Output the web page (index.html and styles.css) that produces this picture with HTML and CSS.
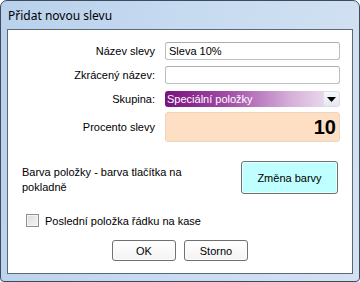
FILE: index.html
```html
<!DOCTYPE html>
<html lang="cs">
<head>
    <meta charset="UTF-8">
    <title>Přidat novou slevu</title>
    <link rel="stylesheet" href="styles.css">
</head>
<body>
    <div class="window">
        <div class="titlebar">Přidat novou slevu</div>
        <div class="client">
            <!-- Main fields -->
            <div class="form">
                <label class="lbl">Název slevy</label>
                <div class="textbox">Sleva 10%</div>

                <label class="lbl row2">Zkrácený název:</label>
                <div class="textbox row2"></div>

                <label class="lbl row3">Skupina:</label>
                <div class="combo row3">
                    <span class="combo-text">Speciální položky</span>
                    <span class="combo-btn">
                        <svg width="9" height="5" viewBox="0 0 9 5"><path d="M0 0H9L4.5 5Z" fill="#000"/></svg>
                    </span>
                </div>

                <label class="lbl row4">Procento slevy</label>
                <div class="percent row4">10</div>
            </div>

            <!-- Colour row -->
            <div class="color-row">
                <p class="color-text">Barva položky - barva tlačítka na pokladně</p>
                <button class="btn btn-color">Změna barvy</button>
            </div>

            <label class="check-row">
                <span class="checkbox"></span>
                Poslední položka řádku na kase
            </label>

            <div class="actions">
                <button class="btn btn-ok">OK</button>
                <button class="btn btn-cancel">Storno</button>
            </div>
        </div>
    </div>
</body>
</html>
```

FILE: styles.css
```css
/* Window frame */
body {
    margin: 0;
    font-family: "Liberation Sans", Arial, sans-serif;
    font-size: 11px;
    color: #000;
    background: #fff;
}
.window {
    width: 360px;
    height: 282px;
    box-sizing: border-box;
    border: 1px solid #3d4b5c;
    border-radius: 7px 7px 4px 4px;
    background: linear-gradient(100deg, #b9d1ec 0%, #c6daf0 45%, #d3e2f2 100%);
    padding: 0 6px 7px 6px;
    display: flex;
    flex-direction: column;
}
.titlebar {
    height: 28px;
    line-height: 29px;
    padding-left: 1px;
    font-family: "Noto Sans", "Liberation Sans", sans-serif;
    font-size: 12px;
    color: #000;
}
.client {
    flex: 1;
    border: 1px solid #5b6876;
    background: #fff;
}

/* Fields */
.form {
    display: grid;
    grid-template-columns: 147px 175px;
    column-gap: 10px;
    padding-top: 12px;
}
.lbl {
    text-align: right;
    align-self: center;
}
.textbox {
    height: 18px;
    box-sizing: border-box;
    border: 1px solid #b9bec5;
    border-top-color: #a9aeb6;
    border-radius: 3px;
    padding: 2px 3px;
    line-height: 13px;
}
.row2 {
    margin-top: 6px;
}
.row3 {
    margin-top: 7px;
}
.row4 {
    margin-top: 5px;
}
.combo {
    height: 16px;
    box-sizing: border-box;
    border-radius: 3px;
    display: flex;
    background: linear-gradient(90deg, #7a1180 0%, #a04ba6 35%, #d6b0da 72%, #f1e9f4 100%);
    overflow: hidden;
}
.combo-text {
    flex: 1;
    color: #fff;
    padding-left: 2px;
    line-height: 16px;
}
.combo-btn {
    width: 15px;
    border: 1px solid #dcdfe6;
    border-radius: 0 3px 3px 0;
    background: linear-gradient(#f7f8fa, #e4e8ee);
    display: flex;
    align-items: center;
    justify-content: center;
}
.percent {
    height: 30px;
    box-sizing: border-box;
    border: 1px solid #e9d5c1;
    border-radius: 3px;
    background: #ffdfc3;
    font-weight: bold;
    font-size: 20px;
    text-align: right;
    line-height: 28px;
    padding-right: 3px;
}

/* Colour row */
.color-row {
    display: flex;
    align-items: flex-start;
    justify-content: space-between;
    padding: 19px 14px 0 14px;
}
.color-text {
    margin: 4px 0 0 0;
    width: 165px;
    line-height: 15px;
}
.btn {
    font-family: "Liberation Sans", Arial, sans-serif;
    font-size: 11px;
    color: #000;
    border: 1px solid #707070;
    border-radius: 3px;
    padding: 0;
    box-shadow: inset 0 0 0 1px #fcfcfc;
}
.btn-color {
    width: 97px;
    height: 33px;
    background: #bfffff;
    box-shadow: inset 0 0 0 1px #e8ffff;
}

/* Checkbox */
.check-row {
    display: flex;
    align-items: center;
    gap: 6px;
    margin: 19px 0 0 18px;
}
.checkbox {
    width: 11px;
    height: 11px;
    border: 1px solid #8f8f8f;
    background: linear-gradient(135deg, #dcdcdc, #f6f6f6);
    box-shadow: inset 0 0 0 1px #f4f4f4;
}

/* Bottom buttons */
.actions {
    display: flex;
    justify-content: center;
    gap: 8px;
    margin-top: 13px;
}
.actions .btn {
    width: 64px;
    height: 21px;
    background: linear-gradient(#ffffff, #f3f3f3);
}
```
